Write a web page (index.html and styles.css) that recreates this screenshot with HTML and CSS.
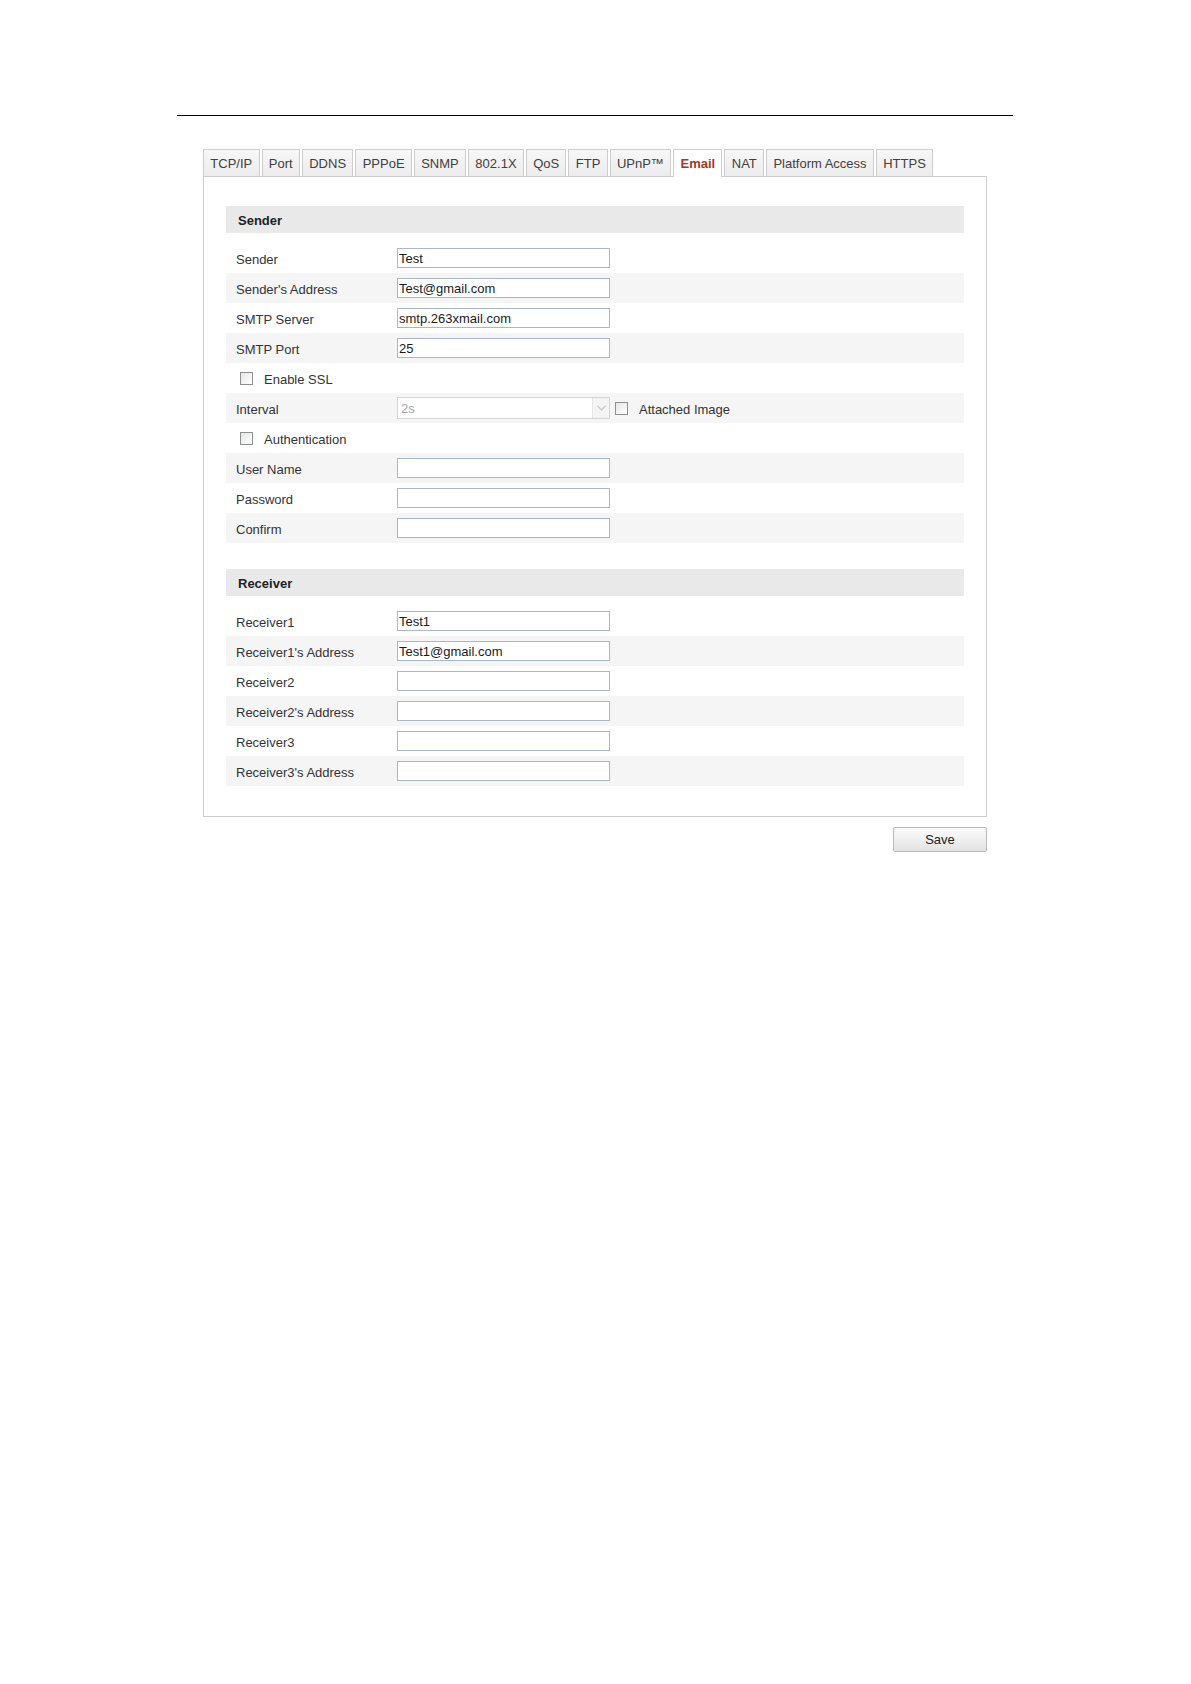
FILE: index.html
```html
<!DOCTYPE html>
<html lang="en">
<head>
<meta charset="utf-8">
<title>Email</title>
<link rel="stylesheet" href="styles.css">
</head>
<body>
<div class="page-rule"></div>
<div class="content">
  <div class="tabs">
    <div class="tab">TCP/IP</div>
    <div class="tab">Port</div>
    <div class="tab">DDNS</div>
    <div class="tab">PPPoE</div>
    <div class="tab">SNMP</div>
    <div class="tab">802.1X</div>
    <div class="tab">QoS</div>
    <div class="tab">FTP</div>
    <div class="tab">UPnP™</div>
    <div class="tab active">Email</div>
    <div class="tab">NAT</div>
    <div class="tab">Platform Access</div>
    <div class="tab">HTTPS</div>
  </div>
  <div class="panel">
    <div class="section">
      <div class="section-head">Sender</div>
      <div class="rows">
        <div class="row"><span class="label">Sender</span><input class="field" type="text" value="Test"></div>
        <div class="row"><span class="label">Sender's Address</span><input class="field" type="text" value="Test@gmail.com"></div>
        <div class="row"><span class="label">SMTP Server</span><input class="field" type="text" value="smtp.263xmail.com"></div>
        <div class="row"><span class="label">SMTP Port</span><input class="field" type="text" value="25"></div>
        <div class="row check-row"><span class="box"></span><span class="check-label">Enable SSL</span></div>
        <div class="row"><span class="label">Interval</span>
          <div class="select">
            <span class="select-value">2s</span>
            <span class="select-arrow"><svg width="9" height="6" viewBox="0 0 9 6"><path d="M0.5 0.8 L4.5 4.8 L8.5 0.8" fill="none" stroke="#c4c4c4" stroke-width="1.2"/></svg></span>
          </div>
          <span class="box inline-box"></span><span class="check-label">Attached Image</span>
        </div>
        <div class="row check-row"><span class="box"></span><span class="check-label">Authentication</span></div>
        <div class="row"><span class="label">User Name</span><input class="field" type="text" value=""></div>
        <div class="row"><span class="label">Password</span><input class="field" type="password" value=""></div>
        <div class="row"><span class="label">Confirm</span><input class="field" type="password" value=""></div>
      </div>
    </div>
    <div class="section section-gap">
      <div class="section-head">Receiver</div>
      <div class="rows">
        <div class="row"><span class="label">Receiver1</span><input class="field" type="text" value="Test1"></div>
        <div class="row"><span class="label">Receiver1's Address</span><input class="field" type="text" value="Test1@gmail.com"></div>
        <div class="row"><span class="label">Receiver2</span><input class="field" type="text" value=""></div>
        <div class="row"><span class="label">Receiver2's Address</span><input class="field" type="text" value=""></div>
        <div class="row"><span class="label">Receiver3</span><input class="field" type="text" value=""></div>
        <div class="row"><span class="label">Receiver3's Address</span><input class="field" type="text" value=""></div>
      </div>
    </div>
  </div>
  <div class="actions">
    <button class="save" type="button">Save</button>
  </div>
</div>
</body>
</html>
```
FILE: styles.css
```css
* {
  box-sizing: border-box;
}

html, body {
  margin: 0;
  padding: 0;
  background: #ffffff;
}

body {
  font-family: "Liberation Sans", Arial, sans-serif;
  font-size: 13px;
  color: #333333;
}

.page-rule {
  margin-left: 177px;
  width: 836px;
  height: 116px;
  border-bottom: 1px solid #000000;
}

.content {
  margin: 33px 0 0 203px;
  width: 784px;
}

.tabs {
  display: flex;
  align-items: flex-end;
  gap: 2px;
}

.tab {
  height: 27px;
  line-height: 24px;
  padding: 2px 6.3px 0;
  border: 1px solid #cdcdcd;
  border-bottom: none;
  background: linear-gradient(#f7f7f7, #ececec);
  color: #404040;
  white-space: nowrap;
}

.tab.active {
  height: 28px;
  margin-bottom: -1px;
  background: #ffffff;
  color: #a8351f;
  font-weight: bold;
  position: relative;
  z-index: 1;
}

.panel {
  border: 1px solid #cccccc;
  padding: 29px 22px 30px 22px;
}

.section-gap {
  margin-top: 26px;
}

.section-head {
  height: 27px;
  line-height: 29px;
  padding-left: 12px;
  background: #e9e9e9;
  font-weight: bold;
  color: #222222;
}

.rows {
  margin-top: 10px;
}

.row {
  display: flex;
  align-items: center;
  height: 30px;
  padding-left: 10px;
}

.rows .row:nth-child(even) {
  background: #f5f5f5;
}

.label {
  width: 161px;
  flex: none;
  padding-top: 2px;
  white-space: nowrap;
}

.field {
  width: 213px;
  height: 20px;
  margin: 0;
  padding: 0 1px;
  border: 1px solid #a9b7c9;
  background: #ffffff;
  font-family: "Liberation Sans", Arial, sans-serif;
  font-size: 13px;
  color: #1a1a1a;
  outline: none;
}

.check-row {
  padding-left: 14px;
}

.box {
  width: 13px;
  height: 13px;
  flex: none;
  border: 1px solid #8e8f8f;
  background: linear-gradient(135deg, #e6e6e6, #ffffff);
}

.check-label {
  margin-left: 11px;
  padding-top: 2px;
  white-space: nowrap;
}

.select {
  width: 213px;
  height: 22px;
  flex: none;
  display: flex;
  align-items: center;
  border: 1px solid #d4d4d4;
  background: #ffffff;
}

.select-value {
  flex: 1;
  padding-left: 3px;
  color: #a6a6a6;
}

.select-arrow {
  width: 17px;
  height: 20px;
  display: flex;
  align-items: center;
  justify-content: center;
  background: #f4f4f4;
  border-left: 1px solid #e6e6e6;
}

.inline-box {
  margin-left: 5px;
}

.actions {
  display: flex;
  justify-content: flex-end;
  margin-top: 10px;
}

.save {
  width: 94px;
  height: 25px;
  margin-right: 0;
  padding: 0;
  border: 1px solid #b9b9b9;
  border-radius: 2px;
  background: linear-gradient(#fbfbfb, #e3e3e3);
  font-family: "Liberation Sans", Arial, sans-serif;
  font-size: 13px;
  color: #222222;
}
```
